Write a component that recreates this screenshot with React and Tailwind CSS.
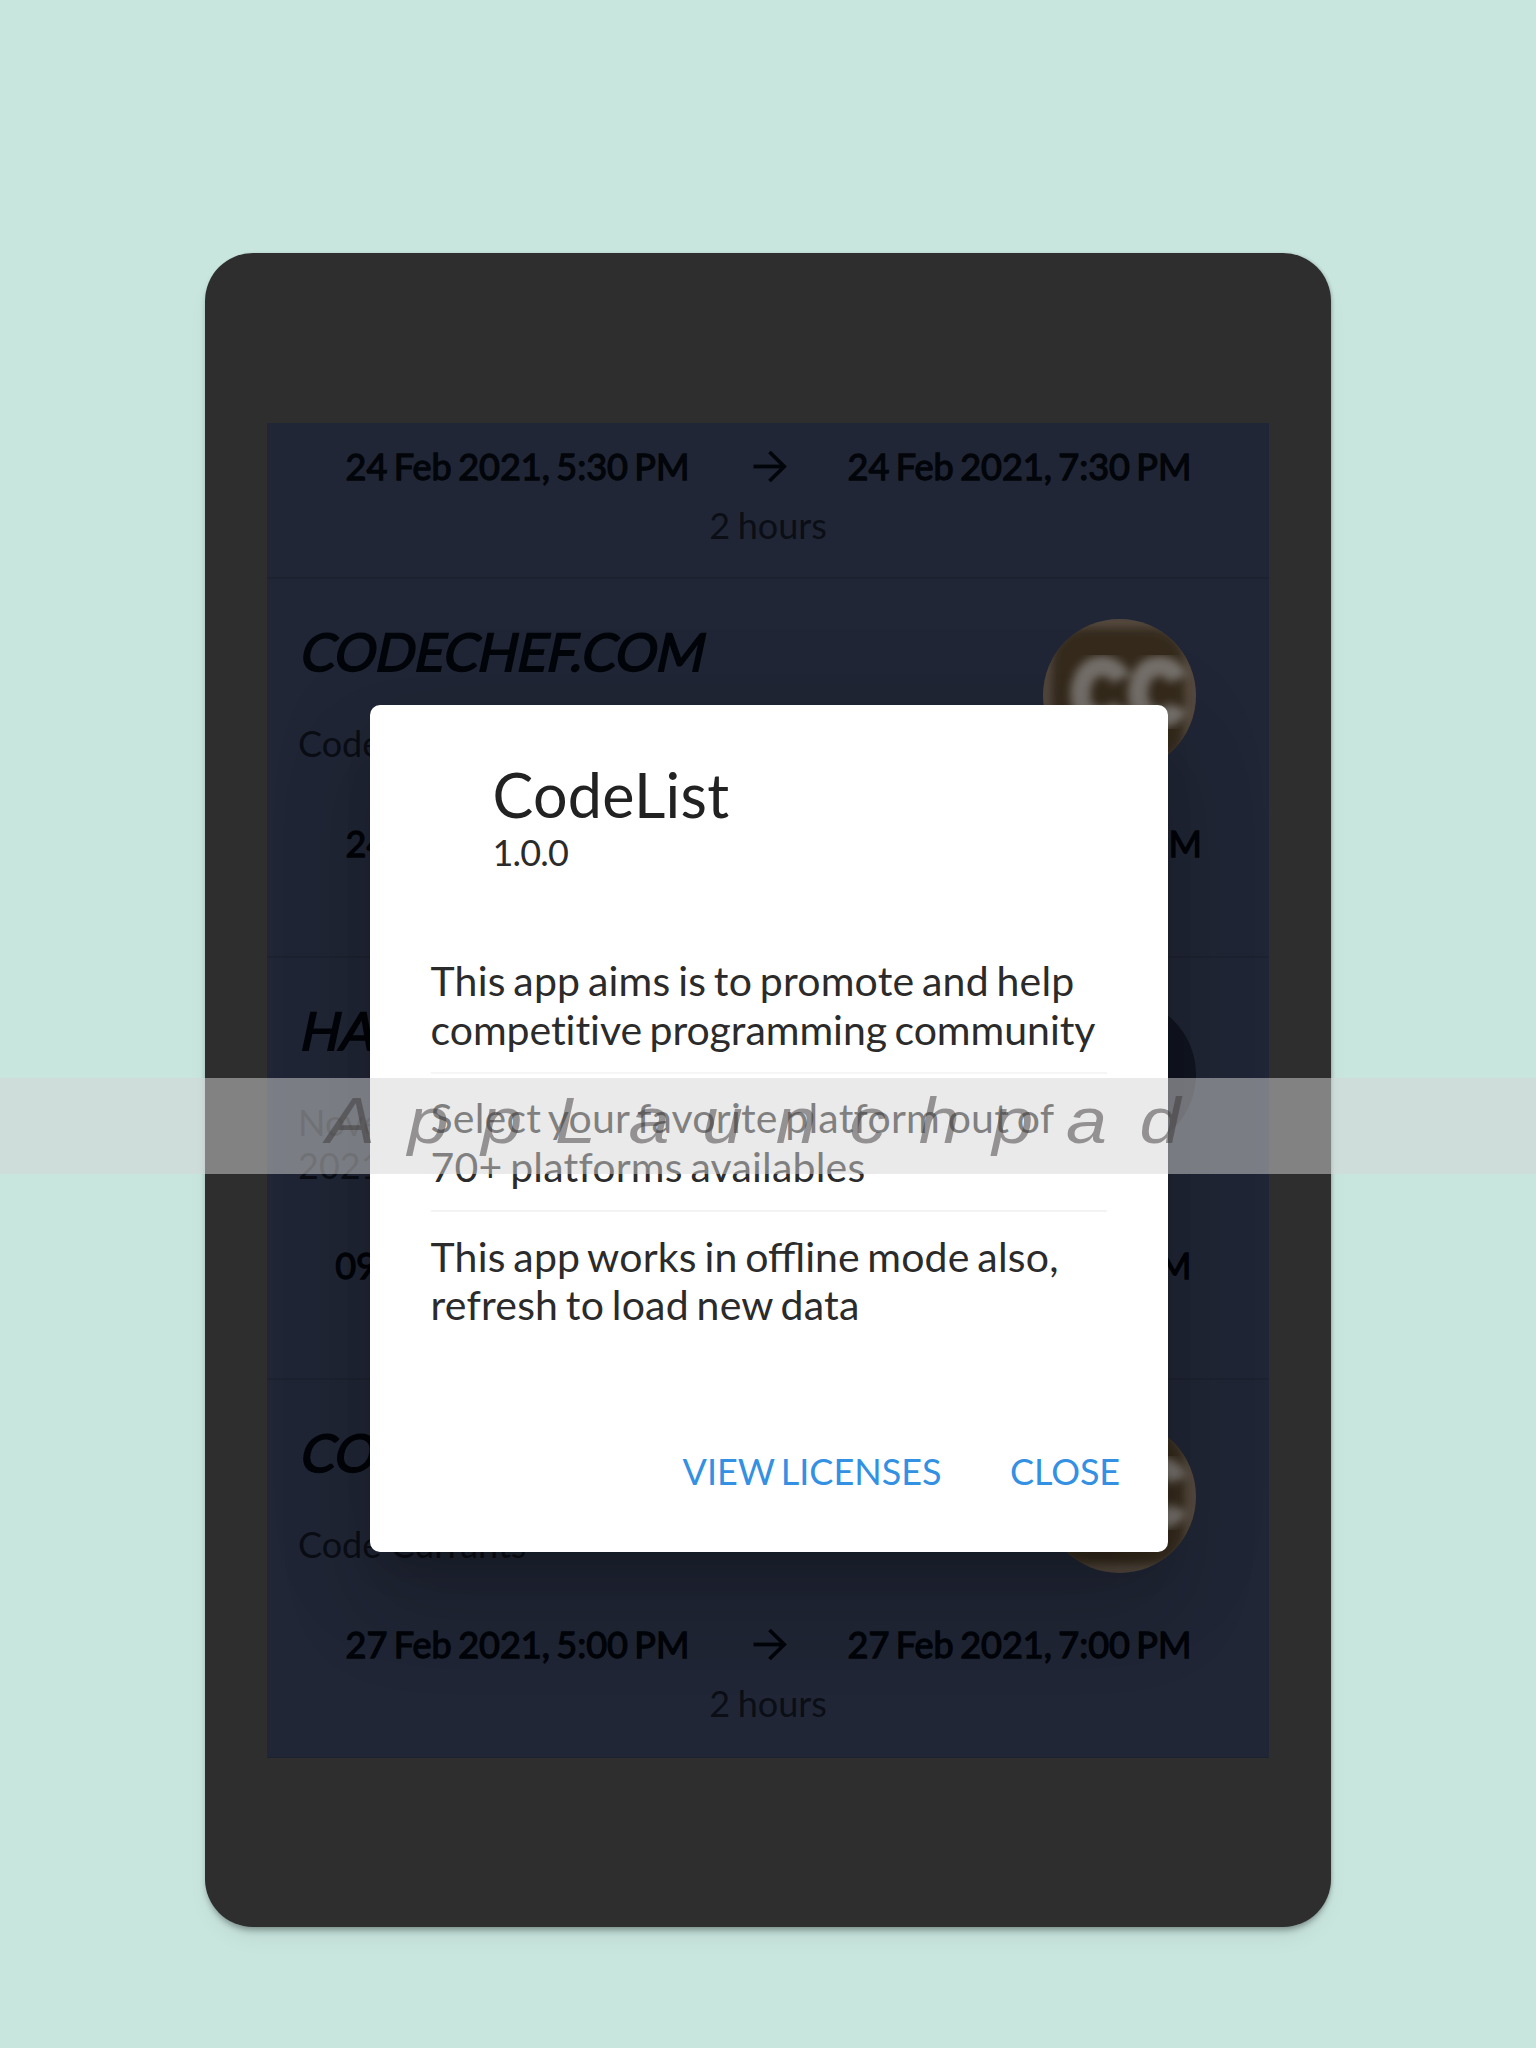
import React from "react";

function Arrow() {
  return (
    <svg className="h-[34px] w-[36px] shrink-0" viewBox="0 0 36 34" fill="none" stroke="#020509" strokeWidth="3.8">
      <path d="M2.5 17.5H33" />
      <path d="M18.5 3L33.2 17.5L18.5 32" />
    </svg>
  );
}

function Schedule({ from, to, children }) {
  return (
    <>
      <div className="grid h-11 grid-cols-[501px_1px_501px] items-center text-[36px] leading-[44px] [word-spacing:-2.8px] text-[#020509] [-webkit-text-stroke:1.3px_#020509]">
        <div className="whitespace-nowrap text-center">{from}</div>
        <div className="flex justify-center">
          <Arrow />
        </div>
        <div className="whitespace-nowrap text-center">{to}</div>
      </div>
      <div className="mt-[15px] mb-[30px] h-11 text-center text-[36px] leading-[44px] [word-spacing:-1.5px] text-[#0b0e15]">
        {children}
      </div>
    </>
  );
}

function ChefAvatar() {
  return (
    <svg className="size-[153px]" viewBox="0 0 153 153">
      <defs>
        <clipPath id="disc">
          <circle cx="76.5" cy="76.5" r="76.5" />
        </clipPath>
        <filter id="soft" x="-20%" y="-20%" width="140%" height="140%">
          <feGaussianBlur stdDeviation="4.5" />
        </filter>
      </defs>
      <g clipPath="url(#disc)">
        <rect width="153" height="153" fill="#544940" />
        <rect x="9" y="9" width="132" height="135" rx="34" fill="#36291f" filter="url(#soft)" />
        <g filter="url(#soft)" fill="none" stroke="#75706b" strokeWidth="20">
          <path d="M78 60C72 47 60 45 51 49C36 56 33 84 44 94C54 102 72 100 78 88" />
          <path d="M135 60C130 47 117 45 108 49C93 56 91 84 102 94C112 102 130 100 135 88" />
        </g>
      </g>
    </svg>
  );
}

function Contest({ site, title, avatar, from, to, duration }) {
  return (
    <div className="border-b-2 border-[#1d2230] pb-[2px]">
      <div className="flex h-[104px] items-start justify-between pl-[28.5px] pr-[73px]">
        <div className="mt-[40.5px] origin-bottom-left -skew-x-12 whitespace-nowrap text-[52px] leading-[62px] tracking-[-0.4px] text-[#020509] [-webkit-text-stroke:1.8px_#020509]">
          {site}
        </div>
        <div className="mt-[40px] size-[153px] shrink-0">{avatar}</div>
      </div>
      <div className="mt-[39px] mb-[56px] w-[700px] whitespace-pre-line pl-[31px] text-[36px] leading-[43px] text-[#0b0e15]">
        {title}
      </div>
      <Schedule from={from} to={to}>
        {duration}
      </Schedule>
    </div>
  );
}

function AboutDialog() {
  return (
    <div className="absolute left-[102.5px] top-[281.5px] flex h-[847.5px] w-[798.5px] flex-col rounded-[10px] bg-white text-[#2b2b2b] shadow-[0_26px_36px_-16px_rgba(0,0,0,0.18),0_56px_90px_7px_rgba(0,0,0,0.12),0_21px_108px_18px_rgba(0,0,0,0.06)]">
      <div className="pl-[123px] pt-[54px]">
        <div className="text-[61px] leading-[72px] tracking-[0.3px] text-[#222]">CodeList</div>
        <div className="-mt-px text-[36px] leading-[44px] tracking-[-0.8px]">1.0.0</div>
      </div>
      <div className="mx-[61px] mt-[83.5px] whitespace-nowrap text-[41px] leading-[48.5px] tracking-[0.2px] [word-spacing:-3px]">
        <p className="border-b-2 border-[#f5f5f5] pb-[17.5px]">
          This app aims is to promote and help
          <br />
          <span className="tracking-[-0.04px]">competitive programming community</span>
        </p>
        <p className="border-b-2 border-[#f3f3f3] pb-[19px] pt-[20.5px]">
          Select your favorite platform out of
          <br />
          70+ platforms availables
        </p>
        <p className="pt-[20.5px]">
          This app works in <span className="tracking-normal">offline</span> mode also,
          <br />
          refresh to load new data
        </p>
      </div>
      <div className="mb-[59px] mr-[48px] mt-auto flex justify-end gap-[68.5px] text-[36px] leading-[44px] text-[#3390e2]">
        <button className="[word-spacing:-3px]">VIEW LICENSES</button>
        <button className="tracking-[-0.1px]">CLOSE</button>
      </div>
    </div>
  );
}

export default function App() {
  return (
    <div className="relative h-[2048px] w-[1536px] overflow-hidden bg-[#c8e5de] pl-[205px] pt-[253px] font-['Lato',sans-serif]">
      <div className="h-[1674px] w-[1126px] rounded-[48px] bg-[#2e2e2e] px-[62px] pt-[170px] shadow-[0_5px_6px_-2px_rgba(0,0,0,0.35),0_14px_26px_-8px_rgba(0,0,0,0.08),2px_-1px_3px_-1px_rgba(0,0,0,0.12)]">
        <div className="relative h-[1335px] w-[1002px] overflow-hidden bg-[#202635]">
          <div className="border-b-2 border-[#1d2230] pt-[21px]">
            <Schedule from="24 Feb 2021, 5:30 PM" to="24 Feb 2021, 7:30 PM">
              2 hours
            </Schedule>
          </div>
          <Contest
            site="CODECHEF.COM"
            title="Code Mutants"
            avatar={<ChefAvatar />}
            from="24 Feb 2021, 8:00 PM"
            to="24 Feb 2021, 11:00 PM"
            duration="3 hours"
          />
          <Contest
            site="HACKEREARTH.COM"
            title={"November Circuits\n2021"}
            avatar={<div className="size-full rounded-full bg-[#111520]" />}
            from="09 Feb 2021, 10:30 PM"
            to="27 Feb 2021, 9:30 PM"
            duration="18 days"
          />
          <Contest
            site="CODECHEF.COM"
            title="Code Currants"
            avatar={<ChefAvatar />}
            from="27 Feb 2021, 5:00 PM"
            to="27 Feb 2021, 7:00 PM"
            duration="2 hours"
          />
          <AboutDialog />
        </div>
      </div>
      <div className="absolute inset-x-0 top-[1078px] h-24 bg-[#d5d5d5]/50">
        <div className="ml-[326px] w-max origin-left scale-x-[1.15] font-['Liberation_Sans',sans-serif] text-[64px] italic leading-[86px] tracking-[28.4px] text-[#3b3738]/50">
          AppLaunchpad
        </div>
      </div>
    </div>
  );
}
